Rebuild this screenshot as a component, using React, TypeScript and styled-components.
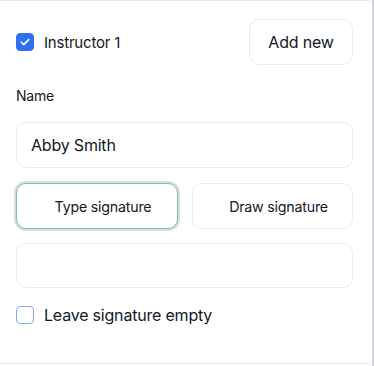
import React, { useState } from "react";
import styled, { createGlobalStyle } from "styled-components";

const GlobalStyle = createGlobalStyle`
  html, body {
    margin: 0;
    padding: 0;
    background: #fff;
  }
  body {
    font-family: Inter, "Noto Sans", "Liberation Sans", sans-serif;
    color: #111827;
    letter-spacing: -0.2px;
  }
`;

const Frame = styled.div`
  width: 374px;
  height: 366px;
  display: flex;
  box-sizing: border-box;
`;

const Panel = styled.div`
  width: 370px;
  height: 364px;
  box-sizing: border-box;
  border-top: 1px solid #e2e8f0;
  border-bottom: 1px solid #e2e8f0;
  padding: 18px 17px 0 16px;
  display: flex;
  flex-direction: column;
`;

const Divider = styled.div`
  width: 2px;
  margin-left: 2px;
  height: 366px;
  background: #cfd7e2;
`;

const HeaderRow = styled.div`
  display: flex;
  align-items: center;
  justify-content: space-between;
  height: 46px;
`;

const CheckLabel = styled.label<{ size: number }>`
  display: flex;
  align-items: center;
  gap: 10px;
  font-size: ${(p) => p.size}px;
  cursor: pointer;
`;

const Box = styled.span<{ checked: boolean }>`
  width: 18px;
  height: 18px;
  box-sizing: border-box;
  border-radius: 4px;
  display: flex;
  align-items: center;
  justify-content: center;
  background: ${(p) => (p.checked ? "#2f6ff2" : "#fff")};
  border: 1px solid ${(p) => (p.checked ? "#2f6ff2" : "#84a6f5")};
`;

const OutlineButton = styled.button`
  height: 46px;
  box-sizing: border-box;
  background: #fff;
  border: 1px solid #e8ebf1;
  border-radius: 10px;
  font-family: inherit;
  letter-spacing: inherit;
  font-size: 16px;
  color: #111827;
  cursor: pointer;
`;

const AddButton = styled(OutlineButton)`
  width: 104px;
`;

const FieldLabel = styled.div`
  font-size: 14px;
  margin-top: 21px;
  line-height: 20px;
`;

const TextInput = styled.input`
  margin-top: 16px;
  height: 46px;
  box-sizing: border-box;
  border: 1px solid #e8ebf1;
  border-radius: 10px;
  padding: 0 14px;
  font-family: inherit;
  letter-spacing: inherit;
  font-size: 16px;
  color: #111827;
  outline: none;
`;

const Tabs = styled.div`
  margin-top: 15px;
  display: grid;
  grid-template-columns: 162px 161px;
  justify-content: space-between;
`;

const TabButton = styled(OutlineButton)<{ active: boolean }>`
  font-size: 14.2px;
  padding-left: 18px;
  border-color: ${(p) => (p.active ? "#86c290" : "#e8ebf1")};
  box-shadow: ${(p) => (p.active ? "0 0 0 2px #d5dde8" : "none")};
`;

const SignatureBox = styled.div`
  margin-top: 14px;
  height: 45px;
  box-sizing: border-box;
  border: 1px solid #e8ebf1;
  border-radius: 10px;
`;

const EmptyRow = styled.div`
  margin-top: 17px;
`;

function Check({
  checked,
  onToggle,
  size,
  children,
}: {
  checked: boolean;
  onToggle: () => void;
  size: number;
  children: React.ReactNode;
}) {
  return (
    <CheckLabel size={size} onClick={onToggle}>
      <Box checked={checked}>
        {checked && (
          <svg width="12" height="12" viewBox="0 0 12 12" fill="none">
            <path d="M2.3 6.2l2.4 2.4 5-5" stroke="#fff" strokeWidth="1.6" strokeLinecap="round" strokeLinejoin="round" />
          </svg>
        )}
      </Box>
      {children}
    </CheckLabel>
  );
}

export default function App() {
  const [instructor, setInstructor] = useState(true);
  const [empty, setEmpty] = useState(false);
  const [mode, setMode] = useState<"type" | "draw">("type");
  const [name, setName] = useState("Abby Smith");

  return (
    <>
      <GlobalStyle />
      <Frame>
        <Panel>
          <HeaderRow>
            <Check size={15} checked={instructor} onToggle={() => setInstructor(!instructor)}>
              Instructor 1
            </Check>
            <AddButton>Add new</AddButton>
          </HeaderRow>
          <FieldLabel>Name</FieldLabel>
          <TextInput value={name} onChange={(e) => setName(e.target.value)} />
          <Tabs>
            <TabButton active={mode === "type"} onClick={() => setMode("type")}>
              Type signature
            </TabButton>
            <TabButton active={mode === "draw"} onClick={() => setMode("draw")}>
              Draw signature
            </TabButton>
          </Tabs>
          <SignatureBox />
          <EmptyRow>
            <Check size={16} checked={empty} onToggle={() => setEmpty(!empty)}>
              Leave signature empty
            </Check>
          </EmptyRow>
        </Panel>
        <Divider />
      </Frame>
    </>
  );
}
